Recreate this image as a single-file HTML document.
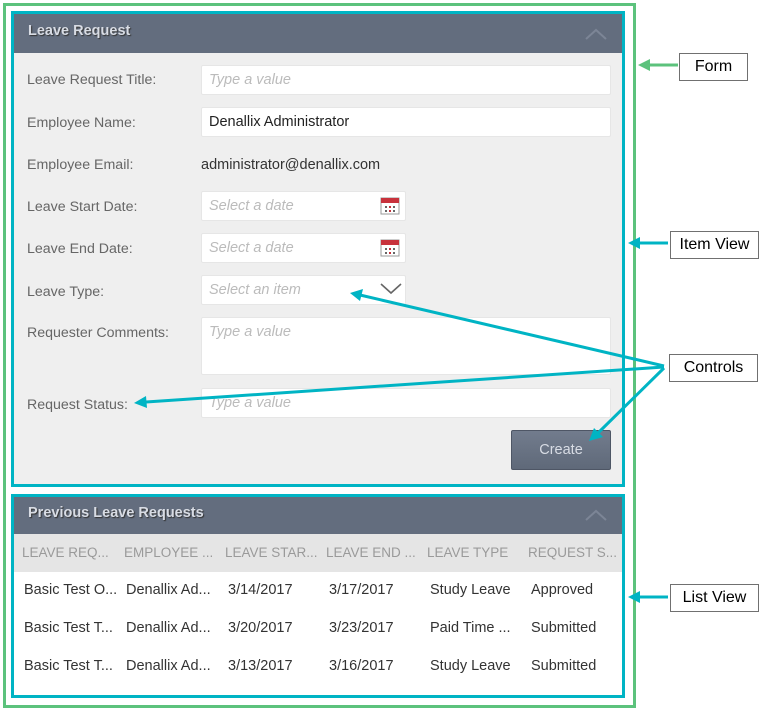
<!DOCTYPE html>
<html><head><style>
body{margin:0;width:770px;height:711px;background:#fff;position:relative;font-family:"Liberation Sans",sans-serif;overflow:hidden}
.a{position:absolute;box-sizing:border-box}
.lbl{position:absolute;left:27px;font-size:14.2px;color:#666}
.inp{position:absolute;left:201px;background:#fff;border:1px solid #e6e6e6;border-radius:2px;font-size:14.5px;color:#bbb;font-style:italic;padding:6px 7px;box-sizing:border-box;height:30px}
.hdr{background:#636d7e;color:#d8dce4;font-weight:bold;font-size:14.5px;text-shadow:1px 1px 1px #333}
.box{position:absolute;border:1px solid #707070;background:#fff;font-family:"Liberation Sans",Arial,sans-serif;font-size:16px;text-align:center;line-height:25px;color:#000}
.col{position:absolute;font-size:13.5px;color:#9a9a9a}
.cell{position:absolute;font-size:14.5px;color:#333}
</style></head><body>
<div class="a" style="left:3px;top:3px;width:633px;height:705px;border:3px solid #5cc27c"></div>
<div class="a" style="left:11px;top:11px;width:614px;height:476px;border:3px solid #00b4c4"></div>
<div class="a" style="left:14px;top:14px;width:608px;height:470px;background:#efefef"></div>
<div class="a hdr" style="left:14px;top:14px;width:608px;height:39px;padding:9px 14px">Leave Request</div>
<svg class="a" style="left:585px;top:28px" width="22" height="12"><path d="M1 11 L11 2 L21 11" fill="none" stroke="#7c8596" stroke-width="2"/></svg>
<div class="lbl" style="top:72px">Leave Request Title:</div>
<div class="inp" style="top:65px;width:410px">Type a value</div>
<div class="lbl" style="top:115px">Employee Name:</div>
<div class="inp" style="top:107px;width:410px;color:#222;font-style:normal">Denallix Administrator</div>
<div class="lbl" style="top:157px">Employee Email:</div>
<div class="a" style="left:201px;top:157px;font-size:14.5px;color:#333">administrator@denallix.com</div>
<div class="lbl" style="top:199px">Leave Start Date:</div>
<div class="inp" style="top:191px;width:205px">Select a date</div>
<div class="lbl" style="top:241px">Leave End Date:</div>
<div class="inp" style="top:233px;width:205px">Select a date</div>
<svg class="a" style="left:380px;top:195px" width="20" height="20"><rect x="1" y="3" width="18" height="16" fill="#fff" stroke="#999"/><rect x="1" y="3" width="18" height="5" fill="#c8323c"/><g fill="#666"><rect x="5" y="11" width="2" height="2"/><rect x="13" y="11" width="2" height="2"/><rect x="5" y="15" width="2" height="2"/><rect x="13" y="15" width="2" height="2"/></g><g fill="#c8323c"><rect x="9" y="11" width="2" height="2"/><rect x="9" y="15" width="2" height="2"/></g></svg>
<svg class="a" style="left:380px;top:237px" width="20" height="20"><rect x="1" y="3" width="18" height="16" fill="#fff" stroke="#999"/><rect x="1" y="3" width="18" height="5" fill="#c8323c"/><g fill="#666"><rect x="5" y="11" width="2" height="2"/><rect x="13" y="11" width="2" height="2"/><rect x="5" y="15" width="2" height="2"/><rect x="13" y="15" width="2" height="2"/></g><g fill="#c8323c"><rect x="9" y="11" width="2" height="2"/><rect x="9" y="15" width="2" height="2"/></g></svg>
<div class="lbl" style="top:284px">Leave Type:</div>
<div class="inp" style="top:275px;width:205px">Select an item</div>
<svg class="a" style="left:380px;top:283px" width="22" height="12"><path d="M1 1 L11 10 L21 1" fill="none" stroke="#666" stroke-width="1.6"/></svg>
<div class="lbl" style="top:325px">Requester Comments:</div>
<div class="inp" style="top:317px;width:410px;height:58px">Type a value</div>
<div class="lbl" style="top:397px">Request Status:</div>
<div class="inp" style="top:388px;width:410px">Type a value</div>
<div class="a" style="left:511px;top:430px;width:100px;height:40px;background:linear-gradient(#727c8d,#5f6979);border:1px solid #4e5665;border-radius:2px;color:#d8dce4;font-size:14.5px;text-align:center;line-height:38px">Create</div>

<div class="a" style="left:11px;top:494px;width:614px;height:204px;border:3px solid #00b4c4"></div>
<div class="a" style="left:14px;top:497px;width:608px;height:198px;background:#fff"></div>
<div class="a hdr" style="left:14px;top:497px;width:608px;height:37px;padding:8px 14px">Previous Leave Requests</div>
<svg class="a" style="left:585px;top:509px" width="22" height="12"><path d="M1 11 L11 2 L21 11" fill="none" stroke="#7c8596" stroke-width="2"/></svg>
<div class="a" style="left:14px;top:534px;width:608px;height:38px;background:#e5e5e5"></div>
<div class="col" style="left:22px;top:545px">LEAVE REQ...</div>
<div class="col" style="left:124px;top:545px">EMPLOYEE ...</div>
<div class="col" style="left:225px;top:545px">LEAVE STAR...</div>
<div class="col" style="left:326px;top:545px">LEAVE END ...</div>
<div class="col" style="left:427px;top:545px">LEAVE TYPE</div>
<div class="col" style="left:528px;top:545px">REQUEST S...</div>
<div class="cell" style="left:24px;top:582px">Basic Test O...</div><div class="cell" style="left:126px;top:582px">Denallix Ad...</div><div class="cell" style="left:228px;top:582px">3/14/2017</div><div class="cell" style="left:329px;top:582px">3/17/2017</div><div class="cell" style="left:430px;top:582px">Study Leave</div><div class="cell" style="left:531px;top:582px">Approved</div>
<div class="cell" style="left:24px;top:620px">Basic Test T...</div><div class="cell" style="left:126px;top:620px">Denallix Ad...</div><div class="cell" style="left:228px;top:620px">3/20/2017</div><div class="cell" style="left:329px;top:620px">3/23/2017</div><div class="cell" style="left:430px;top:620px">Paid Time ...</div><div class="cell" style="left:531px;top:620px">Submitted</div>
<div class="cell" style="left:24px;top:658px">Basic Test T...</div><div class="cell" style="left:126px;top:658px">Denallix Ad...</div><div class="cell" style="left:228px;top:658px">3/13/2017</div><div class="cell" style="left:329px;top:658px">3/16/2017</div><div class="cell" style="left:430px;top:658px">Study Leave</div><div class="cell" style="left:531px;top:658px">Submitted</div>

<div class="box" style="left:679px;top:53px;width:67px;height:26px">Form</div>
<div class="box" style="left:670px;top:231px;width:87px;height:26px">Item View</div>
<div class="box" style="left:669px;top:354px;width:87px;height:26px">Controls</div>
<div class="box" style="left:670px;top:584px;width:87px;height:26px">List View</div>
<svg class="a" style="left:0;top:0" width="770" height="711">
<g stroke="#5cc27c" stroke-width="3" fill="#5cc27c"><line x1="678" y1="65" x2="648" y2="65"/><path d="M638 65 L650 59 L650 71Z" stroke="none"/></g>
<g stroke="#00b4c4" stroke-width="3" fill="#00b4c4">
<line x1="668" y1="243" x2="638" y2="243"/><path d="M628 243 L640 237 L640 249Z" stroke="none"/>
<line x1="668" y1="597" x2="638" y2="597"/><path d="M628 597 L640 591 L640 603Z" stroke="none"/>
<line x1="664" y1="366" x2="360" y2="295"/><path d="M350 293 L363 289 L360 301Z" stroke="none"/>
<line x1="664" y1="367" x2="146" y2="402"/><path d="M134 403 L146 396 L147 408Z" stroke="none"/>
<line x1="664" y1="368" x2="598" y2="433"/><path d="M589 441 L594 428 L603 437Z" stroke="none"/>
</g></svg>
</body></html>
